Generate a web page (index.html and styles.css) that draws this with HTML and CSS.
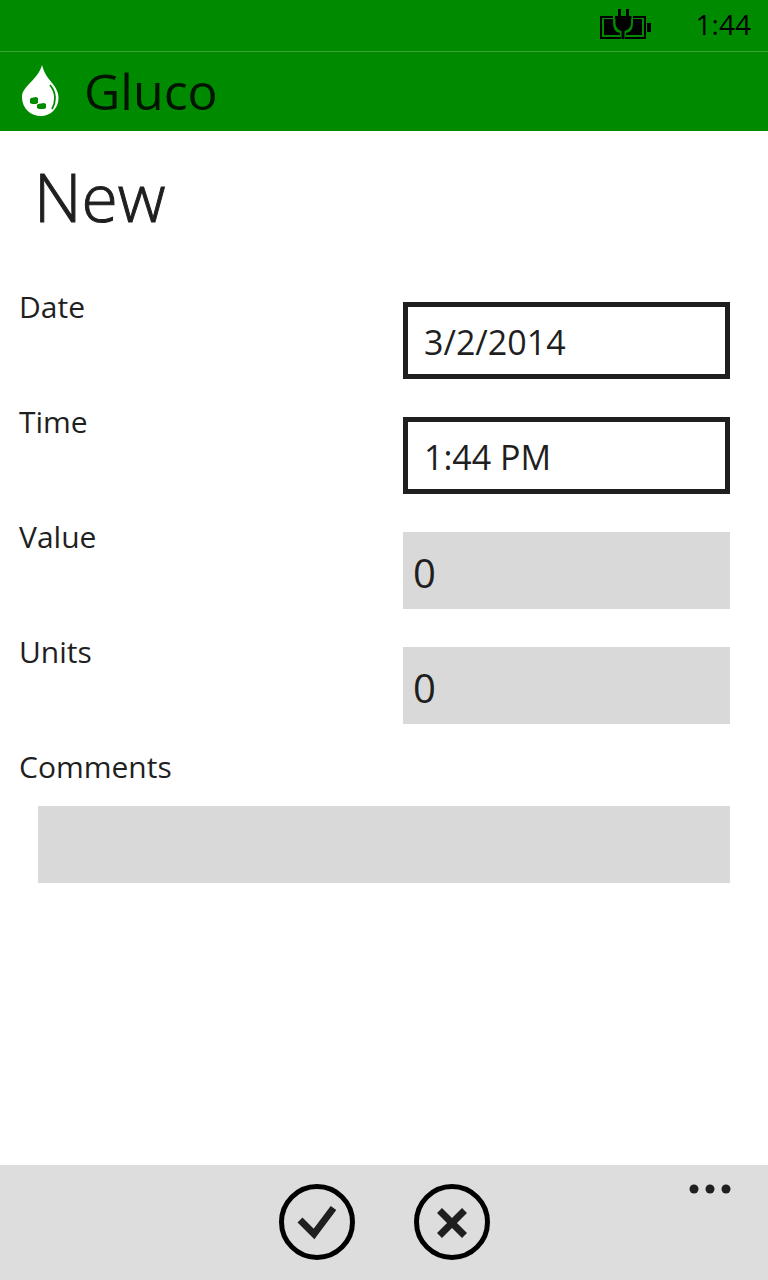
FILE: index.html
```
<!DOCTYPE html>
<html lang="en">
<head>
<meta charset="utf-8">
<meta name="viewport" content="width=device-width, initial-scale=1">
<title>Gluco</title>
<link rel="stylesheet" href="styles.css">
</head>
<body>
<div class="status">
  <svg class="battery" width="52" height="30" viewBox="0 0 52 30" role="img" aria-label="Charging">
    <path fill="none" stroke="#000" stroke-width="2" d="M14 8H1v21h20M25 29h20V8H31"/>
    <path d="M4 10h38v16H4z"/>
    <rect x="47" y="14" width="4" height="9"/>
    <path fill="#008a00" d="M13 6h20v8q0 9-7 10v4h-6v-4q-7-1-7-10z"/>
    <path d="M15 7h3V0h3v7h5V0h3v7h2.500v3H31v4q0 6-6.500 8v8h-3v-8Q15.500 20 15.500 14v-4H15z"/>
  </svg>
  <time class="clock">1:44</time>
</div>
<header class="titlebar">
  <svg class="logo" width="38" height="52" viewBox="0 0 38 52" aria-hidden="true">
    <path fill="#fff" d="M20 0c2 8 6 13 10 18 4 5 6.500 9 6.500 15C36.500 43 29 51 19 51S0 44 0 32C0 21 16 15 20 0z"/>
    <path fill="none" stroke="#008a00" stroke-width="1.800" d="M28 20q5 6 5 13 0 6-3 11"/>
    <path fill="#008a00" d="M9 33l5-1 2 1v5l-2 1h-4l-2-1v-4zM16 39l6-1 2 1v4l-2 1h-5l-2-1v-3z"/>
  </svg>
  <span class="app-name">Gluco</span>
</header>
<main class="page">
  <h1 class="heading">New</h1>
  <form class="form" id="entry">
    <label class="label" for="date">Date</label>
    <input class="field picker" id="date" type="text" value="3/2/2014">
    <label class="label" for="time">Time</label>
    <input class="field picker" id="time" type="text" value="1:44 PM">
    <label class="label" for="value">Value</label>
    <input class="field" id="value" type="text" inputmode="decimal" value="0">
    <label class="label" for="units">Units</label>
    <input class="field" id="units" type="text" inputmode="decimal" value="0">
    <label class="label wide" for="comments">Comments</label>
    <input class="field comments" id="comments" type="text">
  </form>
</main>
<footer class="appbar">
  <div class="actions">
    <button class="action" type="submit" form="entry" aria-label="Save">
      <svg width="76" height="76" viewBox="0 0 76 76"><circle cx="38" cy="38" r="35.500" fill="none" stroke="#000" stroke-width="5"/><path fill="none" stroke="#1f1f1f" stroke-width="7" d="M21 36l14 14L54.500 24"/></svg>
    </button>
    <button class="action" type="button" aria-label="Cancel">
      <svg width="76" height="76" viewBox="0 0 76 76"><circle cx="38" cy="38" r="35.500" fill="none" stroke="#000" stroke-width="5"/><path fill="none" stroke="#1f1f1f" stroke-width="7" d="M25.500 26.500l25 25M50.500 26.500l-25 25"/></svg>
    </button>
  </div>
  <button class="more" type="button" aria-label="More">
    <svg width="42" height="10" viewBox="0 0 42 10" fill="#1f1f1f"><circle cx="5" cy="5" r="4.500"/><circle cx="21" cy="5" r="4.500"/><circle cx="37" cy="5" r="4.500"/></svg>
  </button>
</footer>
</body>
</html>
```
FILE: styles.css
```
* {
  box-sizing: border-box;
}

body {
  margin: 0;
  min-height: 100vh;
  display: flex;
  flex-direction: column;
  background: #fff;
  color: #1f1f1f;
  font-family: "Open Sans", "Noto Sans", sans-serif;
}

svg {
  display: block;
}

.status {
  display: flex;
  justify-content: flex-end;
  align-items: center;
  gap: 44px;
  min-height: 52px;
  padding: 0 17px 3px 0;
  border-bottom: 1px solid #39a339;
  background: #008a00;
  color: #000;
}

.clock {
  font-size: 28px;
  line-height: 40px;
}

.titlebar {
  display: flex;
  align-items: center;
  gap: 24px;
  min-height: 79px;
  padding: 0 22px 2px;
  background: #008a00;
  color: #001400;
}

.app-name {
  font-size: 50px;
  line-height: 72px;
}

.page {
  flex: 1;
}

.heading {
  margin: 0;
  padding: 20px 34px 42px;
  font-size: 66px;
  font-weight: 300;
  line-height: 90px;
  -webkit-text-stroke: 1px #1f1f1f;
}

.form {
  display: grid;
  grid-template-columns: 1fr 1fr;
  padding: 0 19px;
}

.label {
  font-size: 30px;
  line-height: 48px;
}

.field {
  justify-self: stretch;
  min-width: 0;
  height: 77px;
  margin: 19px;
  padding: 4px 10px 0;
  border: 0;
  border-radius: 0;
  background: #d9d9d9;
  color: #1f1f1f;
  font-family: inherit;
  font-size: 40px;
}

.picker {
  padding: 2px 16px 0;
  border: 5px solid #1f1f1f;
  background: #fff;
  font-size: 34px;
}

.wide {
  grid-column: 1 / -1;
}

.comments {
  grid-column: 1 / -1;
  margin-top: 15px;
}

.appbar {
  display: grid;
  grid-template-columns: 1fr auto 1fr;
  align-items: start;
  min-height: 115px;
  padding: 19px 37px;
  background: #ddd;
}

.actions {
  grid-column: 2;
  display: flex;
  gap: 59px;
}

.action,
.more {
  padding: 0;
  border: 0;
  background: none;
}

.more {
  justify-self: end;
}
```
